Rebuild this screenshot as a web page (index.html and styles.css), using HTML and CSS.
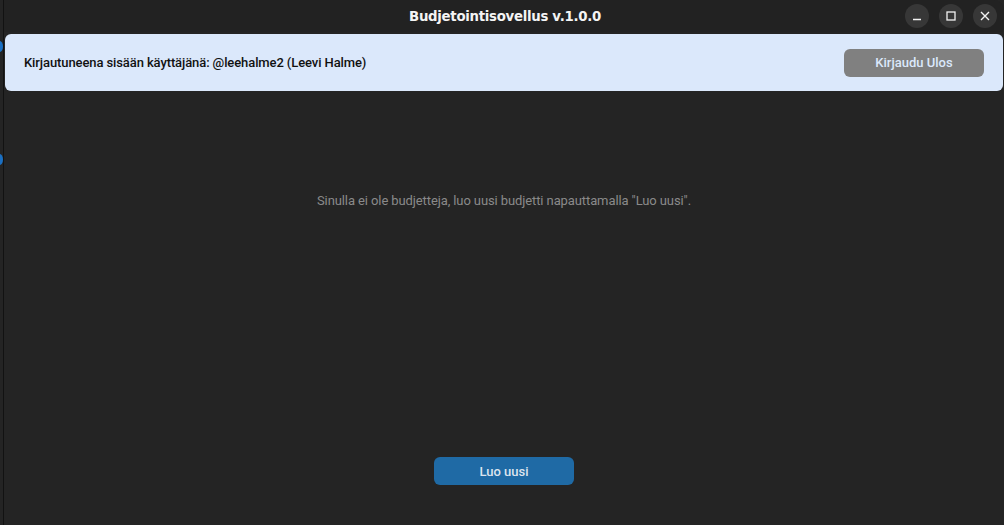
FILE: index.html
```html
<!DOCTYPE html>
<html lang="fi">
<head>
<meta charset="utf-8">
<title>Budjetointisovellus v.1.0.0</title>
<link rel="stylesheet" href="styles.css">
</head>
<body>
<div class="desktop">
  <span class="dot dot-a"></span>
  <span class="dot dot-b"></span>
  <div class="window">
    <div class="titlebar">
      <div class="title">Budjetointisovellus v.1.0.0</div>
      <div class="controls">
        <span class="ctl"><svg width="10" height="10" viewBox="0 0 10 10"><path d="M1 8.5h8" stroke="#f2f2f2" stroke-width="1.4"/></svg></span>
        <span class="ctl"><svg width="10" height="10" viewBox="0 0 10 10"><rect x="1" y="1" width="8" height="8" fill="none" stroke="#f2f2f2" stroke-width="1.3"/></svg></span>
        <span class="ctl"><svg width="10" height="10" viewBox="0 0 10 10"><path d="M1 1l8 8M9 1l-8 8" stroke="#f2f2f2" stroke-width="1.4"/></svg></span>
      </div>
    </div>
    <div class="content">
      <header class="userbar">
        <span class="user">Kirjautuneena sisään käyttäjänä: @leehalme2 (Leevi Halme)</span>
        <button class="btn btn-grey">Kirjaudu Ulos</button>
      </header>
      <main class="main">
        <p class="empty">Sinulla ei ole budjetteja, luo uusi budjetti napauttamalla "Luo uusi".</p>
        <button class="btn btn-blue">Luo uusi</button>
      </main>
    </div>
  </div>
</div>
</body>
</html>
```
FILE: styles.css
```css
* { box-sizing: border-box; }
html, body { margin: 0; padding: 0; }
body {
  width: 1004px;
  height: 525px;
  overflow: hidden;
  background: #1e1e1e;
  font-family: Roboto, "Liberation Sans", sans-serif;
}
.desktop {
  position: relative;
  height: 525px;
  display: flex;
  padding-left: 3px;
  background: #242424;
}
.dot {
  position: absolute;
  left: -4px;
  width: 7px;
  height: 11px;
  border-radius: 50%;
  background: #1a6fc2;
}
.dot-a { top: 41px; }
.dot-b { top: 154px; }
.window {
  flex: 1;
  display: flex;
  flex-direction: column;
  border-left: 1px solid #121212;
  border-top-right-radius: 10px;
  background: #242424;
  overflow: hidden;
}
.titlebar {
  height: 32px;
  flex: none;
  display: flex;
  align-items: center;
  justify-content: center;
  position: relative;
  background: #222222;
}
.title {
  font-family: "DejaVu Sans", sans-serif;
  font-weight: bold;
  font-size: 14px;
  letter-spacing: -0.3px;
  color: #f4f4f4;
  transform: scaleX(0.95);
  margin-left: 2px;
}
.controls {
  position: absolute;
  right: 7px;
  top: 4px;
  display: flex;
  gap: 10px;
}
.ctl {
  width: 24px;
  height: 24px;
  border-radius: 50%;
  background: #373737;
  display: flex;
  align-items: center;
  justify-content: center;
}
.content {
  flex: 1;
  display: flex;
  flex-direction: column;
  padding: 2px 1px 0 1px;
}
.userbar {
  height: 57px;
  flex: none;
  background: #dbe8fb;
  border-radius: 6px;
  display: flex;
  align-items: center;
  justify-content: space-between;
  padding: 0 19px 0 19px;
}
.user {
  font-size: 13px;
  font-weight: 500;
  letter-spacing: -0.1px;
  color: #111;
}
.btn {
  border: none;
  font-family: Roboto, "Liberation Sans", sans-serif;
  font-size: 13px;
  font-weight: 500;
  width: 140px;
  height: 28px;
  border-radius: 6px;
  padding: 0;
}
.btn-grey {
  background: #808080;
  color: #dbe8fb;
}
.btn-blue {
  background: #1f6aa5;
  color: #dce4ee;
}
.main {
  flex: 1;
  display: flex;
  flex-direction: column;
  align-items: center;
  padding-top: 102px;
}
.empty {
  margin: 0 0 248px 0;
  font-size: 13px;
  letter-spacing: -0.1px;
  color: #8a8a8a;
  line-height: 16px;
}
```
